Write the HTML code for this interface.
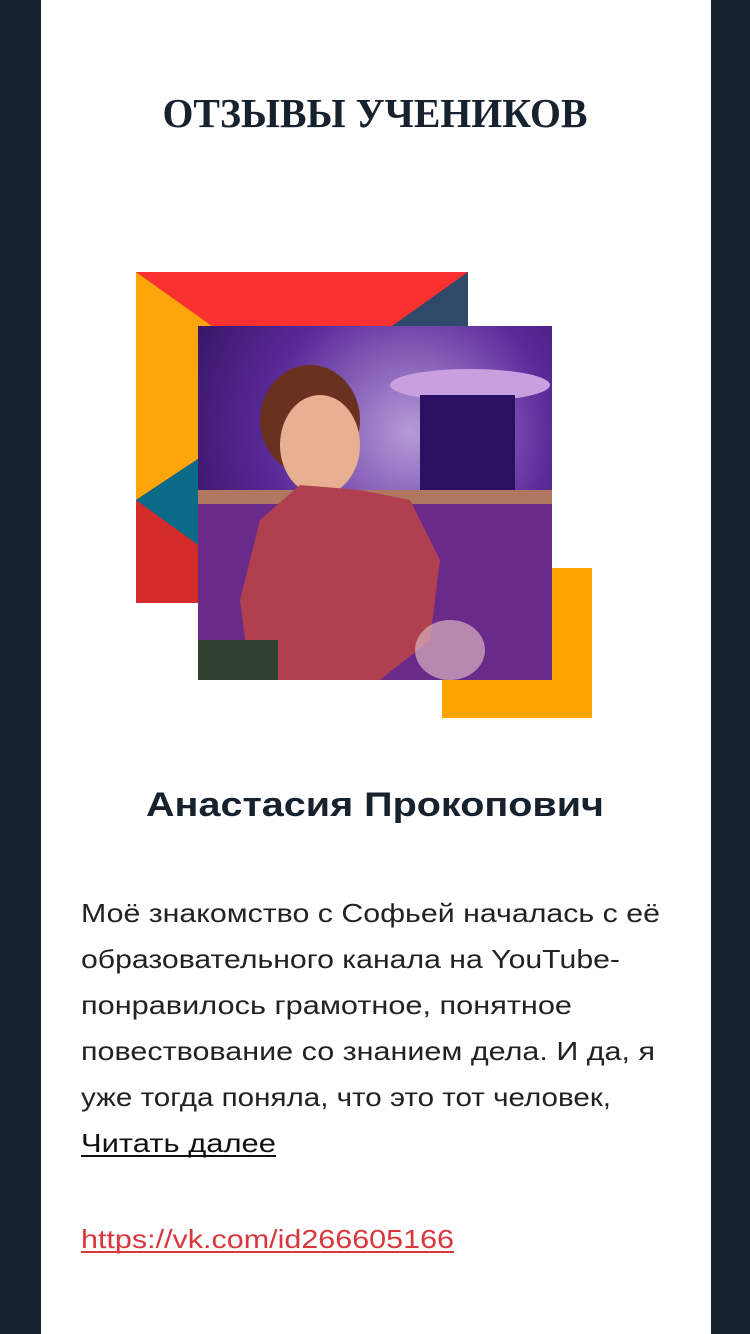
<!DOCTYPE html>
<html><head><meta charset="utf-8"><style>
html,body{margin:0;padding:0;background:#17222f;}
body{width:750px;height:1334px;position:relative;overflow:hidden;}
.col{position:absolute;left:41px;top:0;width:670px;height:1334px;background:#fff;}
svg{position:absolute;left:0;top:0;}
</style></head><body>
<div class="col"></div>
<svg width="750" height="1334" viewBox="0 0 750 1334">
<defs>
<radialGradient id="bg" cx="0.6" cy="0.3" r="0.8">
<stop offset="0" stop-color="#b89ad8"/><stop offset="0.5" stop-color="#5a2a9a"/><stop offset="1" stop-color="#2a0c50"/>
</radialGradient>
</defs>
<text x="375" y="127" text-anchor="middle" font-family="Liberation Serif, serif" font-weight="bold" font-size="41" fill="#17222f" textLength="425" lengthAdjust="spacingAndGlyphs">ОТЗЫВЫ УЧЕНИКОВ</text>
<!-- decor -->
<rect x="136" y="272" width="332" height="331" fill="#d32a2a"/>
<polygon points="136,272 468,272 302,390" fill="#f93131"/>
<polygon points="468,272 468,420 302,390" fill="#2e4a6a"/>
<polygon points="136,272 302,390 136,500" fill="#fda50a"/>
<polygon points="136,500 302,390 302,620" fill="#0a6a88"/>
<rect x="442" y="568" width="150" height="150" fill="#ffa400"/>
<!-- photo -->
<rect x="198" y="326" width="354" height="354" fill="url(#bg)"/>
<rect x="198" y="500" width="354" height="180" fill="#6a2a8a"/>
<rect x="198" y="490" width="354" height="14" fill="#b07860"/>
<ellipse cx="470" cy="385" rx="80" ry="16" fill="#c8a0e0"/>
<rect x="420" y="395" width="95" height="95" fill="#2a1060"/>
<ellipse cx="310" cy="420" rx="50" ry="55" fill="#6a3020"/>
<ellipse cx="320" cy="445" rx="40" ry="50" fill="#e8b090"/>
<polygon points="260,520 300,485 360,490 410,500 440,560 430,640 380,680 250,680 240,600" fill="#b04050"/>
<rect x="198" y="640" width="80" height="40" fill="#304030"/>
<ellipse cx="450" cy="650" rx="35" ry="30" fill="#d8b0c0" opacity="0.7"/>
<text x="375" y="816" text-anchor="middle" font-family="Liberation Sans, sans-serif" font-weight="bold" font-size="34" fill="#17222f" textLength="458" lengthAdjust="spacingAndGlyphs">Анастасия Прокопович</text>
<g font-family="Liberation Sans, sans-serif" font-size="26" fill="#222">
<text x="81" y="922" textLength="579" lengthAdjust="spacingAndGlyphs">Моё знакомство с Софьей началась с её</text>
<text x="81" y="968" textLength="539" lengthAdjust="spacingAndGlyphs">образовательного канала на YouTube-</text>
<text x="81" y="1014" textLength="491" lengthAdjust="spacingAndGlyphs">понравилось грамотное, понятное</text>
<text x="81" y="1060" textLength="574" lengthAdjust="spacingAndGlyphs">повествование со знанием дела. И да, я</text>
<text x="81" y="1106" textLength="530" lengthAdjust="spacingAndGlyphs">уже тогда поняла, что это тот человек,</text>
<text x="81" y="1152" fill="#111" textLength="195" lengthAdjust="spacingAndGlyphs">Читать далее</text>
<text x="81" y="1248" fill="#d9363e" textLength="373" lengthAdjust="spacingAndGlyphs">https://vk.com/id266605166</text>
</g>
<rect x="81" y="1155" width="195" height="2" fill="#111"/>
<rect x="81" y="1251" width="373" height="2" fill="#d9363e"/>
</svg>
</body></html>
